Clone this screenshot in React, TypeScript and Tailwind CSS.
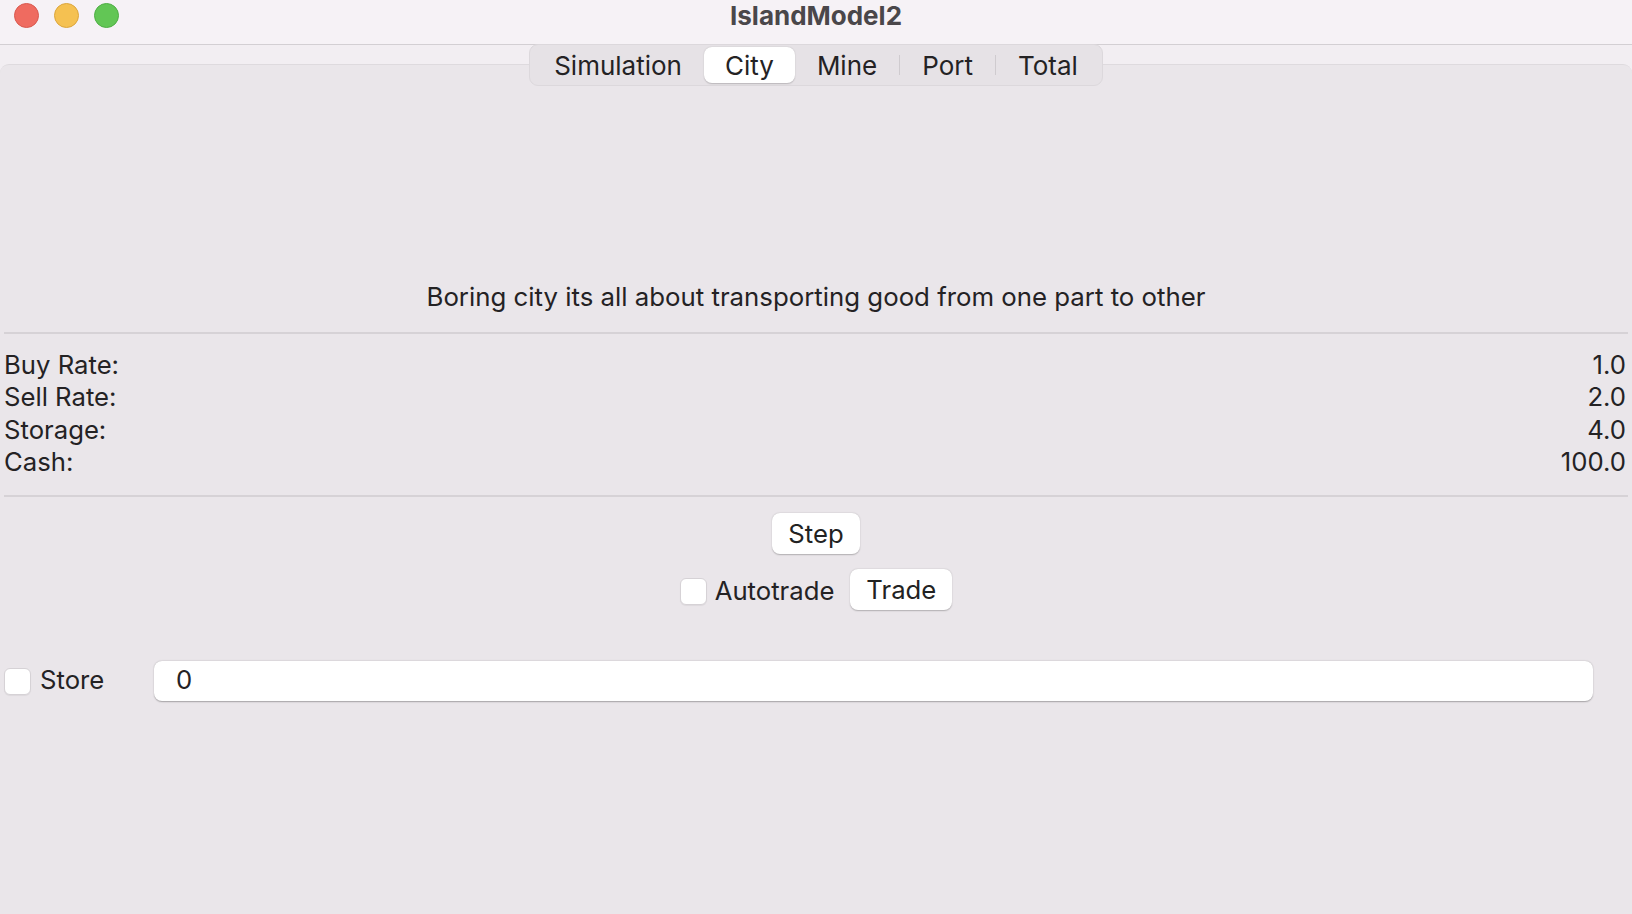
const font = { fontFamily: "Inter, 'Liberation Sans', sans-serif" };

const rows = [
  ["Buy Rate:", "1.0"],
  ["Sell Rate:", "2.0"],
  ["Storage:", "4.0"],
  ["Cash:", "100.0"],
];

const tabs = ["Simulation", "City", "Mine", "Port", "Total"];

const Check = ({ className = "" }: { className?: string }) => (
  <span
    className={
      "block shrink-0 w-[27px] h-[27px] rounded-[6px] bg-white border border-[#d6d2d6] shadow-[0_1px_1px_rgba(0,0,0,0.06)] " +
      className
    }
  />
);

const Btn = ({ label }: { label: string }) => (
  <button className="h-[41px] px-[16px] rounded-[8px] bg-white text-[25.7px] leading-none text-[#222] shadow-[0_0.5px_1.5px_rgba(0,0,0,0.25)]">
    {label}
  </button>
);

export default function App() {
  return (
    <div style={font} className="w-[1632px] h-[914px] flex flex-col bg-[#f2eef2] text-[#242224] overflow-hidden">
      {/* title bar */}
      <div className="h-[45px] shrink-0 grid grid-cols-[1fr_auto_1fr] items-start pt-[3px] bg-[#f6f2f6] border-b border-[#d3cfd3]">
        <div className="flex items-center gap-[15px] pl-[14px]">
          <span className="w-[25px] h-[25px] rounded-full bg-[#ef6b60] border border-[#d9594f]" />
          <span className="w-[25px] h-[25px] rounded-full bg-[#f5c151] border border-[#dca63c]" />
          <span className="w-[25px] h-[25px] rounded-full bg-[#62c655] border border-[#4eae44]" />
        </div>
        <div className="text-[26px] leading-[26px] font-bold text-[#4a474a]">IslandModel2</div>
        <div />
      </div>

      {/* tabs */}
      <div className="relative z-10 flex justify-center mt-[-1px]">
        <div className="flex items-center h-[42px] p-[2px] rounded-[9px] bg-[#e6e2e6] border border-[#dcd8dc] text-[26px]">
          {tabs.map((t, i) => (
            <div key={t} className="flex items-center h-full">
              {i > 2 && <span className="w-px h-[20px] bg-[#cfcbcf]" />}
              <div
                className={
                  t === "City"
                    ? "h-full flex items-center px-[21px] rounded-[8px] bg-white shadow-[0_0.5px_1.5px_rgba(0,0,0,0.2)]"
                    : "h-full flex items-center px-[22px]"
                }
              >
                {t}
              </div>
            </div>
          ))}
        </div>
      </div>

      {/* panel */}
      <div className="flex-1 -mt-[22px] flex flex-col bg-[#eae6ea] border-t border-[#dedade] rounded-t-[9px]">
        <div className="pt-[216px] text-center text-[25.8px] leading-[32px]">
          Boring city its all about transporting good from one part to other
        </div>
        <div className="mt-[19px] mx-[4px] h-[2px] bg-[#d6d2d6]" />
        <div className="pt-[15px] pb-[17px] text-[25.7px] leading-[32.3px]">
          {rows.map(([k, v]) => (
            <div key={k} className="flex justify-between pl-[4px] pr-[6px]">
              <span>{k}</span>
              <span>{v}</span>
            </div>
          ))}
        </div>
        <div className="mx-[4px] h-[2px] bg-[#d6d2d6]" />
        <div className="flex flex-col items-center pt-[16px] gap-[15px]">
          <Btn label="Step" />
          <div className="flex items-center text-[25.7px]">
            <Check className="mt-[3px]" />
            <span className="ml-[8px] mr-[16px] mt-[3px]">Autotrade</span>
            <Btn label="Trade" />
          </div>
        </div>
        <div className="flex items-center mt-[50px] pl-[4px] pr-[39px]">
          <Check className="mt-[2px]" />
          <span className="ml-[9px] text-[25.7px] w-[114px]">Store</span>
          <div className="flex-1 h-[40px] flex items-center pl-[22px] rounded-[8px] bg-white text-[25.7px] shadow-[0_0.5px_1.5px_rgba(0,0,0,0.3)]">
            0
          </div>
        </div>
      </div>
    </div>
  );
}
